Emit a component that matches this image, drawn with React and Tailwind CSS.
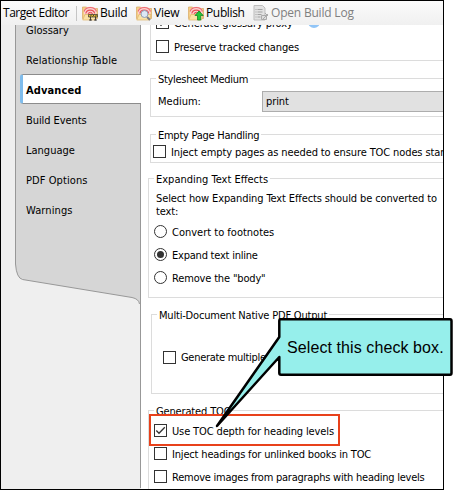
import React from "react";

const UI = "font-['DejaVu_Sans_Condensed','DejaVu_Sans','Noto_Sans',sans-serif] [font-stretch:condensed]";

function Label({ children, className = "" }) {
  return <span className={`whitespace-nowrap ${className}`}>{children}</span>;
}

function Check({ checked }) {
  return (
    <span className="flex h-[13px] w-[13px] shrink-0 items-center justify-center border border-[#333] bg-white">
      {checked && (
        <svg width="11" height="11" viewBox="0 0 11 11" fill="none">
          <path d="M1.3 5.5 4 8.2 9.8 2.2" stroke="#333" strokeWidth="1.3" />
        </svg>
      )}
    </span>
  );
}

function Radio({ checked }) {
  return (
    <span className="flex h-[13px] w-[13px] shrink-0 items-center justify-center rounded-full border border-[#333] bg-white">
      {checked && <span className="h-[7px] w-[7px] rounded-full bg-[#333]" />}
    </span>
  );
}

function Row({ children, control, className = "" }) {
  return (
    <div className={`flex h-[13px] items-start gap-[5px] ${className}`}>
      {control}
      {children}
    </div>
  );
}

function Group({ title, titleClass = "", className = "", children }) {
  return (
    <section className={`shrink-0 border border-r-0 border-[#dcdcdc] ${className}`}>
      <h2 className="-mt-[7px] flex h-[14px]">
        <span className={`ml-[5px] bg-white px-[2px] whitespace-nowrap ${titleClass}`}>{title}</span>
      </h2>
      {children}
    </section>
  );
}

function Folder() {
  return (
    <>
      <path d="M.5 2h4l1.500 1.500h9.500v10h-15z" fill="#f4cf86" stroke="#d9a860" strokeWidth=".7" />
      <path d="M2 9.500V5.500A6.500 5 0 0 1 14.500 5.500V9.500z" fill="#fbd3cf" />
      <path d="M2 6.500A6.500 5.500 0 0 1 14.500 6.500" fill="none" stroke="#ee6a72" strokeWidth="1.200" />
      <path d="M3.800 8.500A4.500 4 0 0 1 12.700 8.500" fill="none" stroke="#e8515a" strokeWidth="1.200" />
      <path d="M6 9.500A2.300 2.200 0 0 1 10.600 9.500" fill="#f6aaa7" stroke="#e8515a" />
      <path d="M.7 15 3 9.500h12L13.500 15z" fill="#fae2a6" stroke="#e0b56c" strokeWidth=".7" />
    </>
  );
}

function ToolIcon({ kind }) {
  return (
    <svg width="16" height="16" viewBox="0 0 16 16" className="shrink-0">
      {kind === "log" ? (
        <>
          <path d="M1 .5h8.500l2.500 2.500v12H1z" fill="#e2e2e2" stroke="#bdbdbd" />
          <path d="M2.500 4.500h1M4.500 4.500h5M2.500 7h1M4.500 7h5M2.500 9.500h1M4.500 9.500h4M2.500 12h1M4.500 12h3" stroke="#a3a3a3" />
          <path d="M8.500 10.500h5v4h-5zM10 14l5-5M12 8l3 3" fill="#ddd" stroke="#aaa" />
        </>
      ) : (
        <Folder />
      )}
      {kind === "build" && (
        <>
          <path d="M6.500 9.500h9V12h-9z" fill="#f2c52f" stroke="#333" strokeWidth=".7" />
          <path d="m8 11.800 1.500-2m1 2 1.500-2m1 2 1.500-2M8.500 12v3.500M13.500 12v3.500M7 15h3m2 0h3" stroke="#333" strokeWidth=".9" />
        </>
      )}
      {kind === "view" && (
        <>
          <path d="m11 12 3 3" stroke="#777b84" strokeWidth="2" />
          <circle cx="8.500" cy="9" r="3.500" fill="#dce8f5" stroke="#93a0b3" />
        </>
      )}
      {kind === "publish" && (
        <path d="m11 6 4.200 4.500h-2.500V15H9.500v-4.500H7z" fill="#25c83b" stroke="#15852a" strokeWidth=".8" />
      )}
    </svg>
  );
}

function Tool({ kind, className = "", children }) {
  return (
    <div className={`flex items-center gap-[2px] ${className}`}>
      <ToolIcon kind={kind} />
      <Label>{children}</Label>
    </div>
  );
}

function Toolbar() {
  return (
    <header className="flex h-[24px] shrink-0 items-center bg-linear-to-b from-[#fbfbfb] to-[#f0f0f0] pl-[2px] font-['Open_Sans','Noto_Sans',sans-serif] text-[12px] leading-[16px] tracking-[-0.2px] [font-stretch:normal]">
      <Label className="w-[73px] tracking-[-0.48px]">Target Editor</Label>
      <span className="mr-[5px] h-[15px] w-px bg-[#c5c5c5]" />
      <Tool kind="build" className="w-[54px]">Build</Tool>
      <Tool kind="view" className="w-[52px]">View</Tool>
      <Tool kind="publish" className="w-[65px] tracking-[-0.35px]">Publish</Tool>
      <Tool kind="log" className="text-[#808080]">Open Build Log</Tool>
    </header>
  );
}

function Tab({ children, className = "" }) {
  return <div className={`flex h-[30px] items-center pt-[4px] pl-[25px] ${className}`}>{children}</div>;
}

function Sidebar() {
  return (
    <nav className="relative w-[140px] shrink-0 bg-[#efefef]">
      <svg className="absolute top-0 left-0" width="140" height="463" viewBox="1 25 140 463">
        <path d="M15.500 24V264Q16.500 278 22.500 279.500L132 297.500Q139 299 139.500 303H140.500V24Z" fill="#d6d6d6" />
        <path d="M15.500 24V264Q16.500 278 22.500 279.500L132 297.500Q139 299 139.500 304M140.500 24V488" fill="none" stroke="#989898" />
      </svg>
      <div className="relative -mt-[11px]">
        <Tab>Glossary</Tab>
        <Tab className="tracking-[0.11px]">Relationship Table</Tab>
        <div className="ml-[19px] flex h-[30px] items-center rounded-l-[3px] border-y border-l-[3px] border-y-[#8c8c8c] border-l-[#7fbcec] bg-white pt-[3px] pl-[3px] font-bold tracking-[0.1px]">
          Advanced
        </div>
        <Tab className="tracking-[-0.08px]">Build Events</Tab>
        <Tab>Language</Tab>
        <Tab className="tracking-[0.08px]">PDF Options</Tab>
        <Tab className="tracking-[0.1px]">Warnings</Tab>
      </div>
    </nav>
  );
}

function Settings() {
  return (
    <main className="flex min-w-0 flex-1 flex-col overflow-hidden bg-white pl-[7px]">
      <section className="ml-[2px] h-[36px] shrink-0 border-b border-l border-[#dcdcdc] pl-[5px]">
        <Row control={<Check checked />} className="-mt-[9px]">
          <Label className="pt-px tracking-[-0.12px]">Generate glossary proxy</Label>
          <span className="ml-[10px] h-[12px] w-[12px] rounded-full border-[4px] border-[#91c5f7]" />
        </Row>
        <Row control={<Check />} className="mt-[11px]">
          <Label className="pt-px tracking-[-0.12px]">Preserve tracked changes</Label>
        </Row>
      </section>
      <Group title="Stylesheet Medium" titleClass="pt-px h-[14px] tracking-[-0.3px]" className="mt-[17px] ml-[2px] h-[39px]">
        <div className="mt-[5px] flex h-[21px] items-center pl-[7px]">
          <Label className="w-[104px]">Medium:</Label>
          <div className="flex h-[21px] flex-1 items-center border border-r-0 border-[#adadad] bg-[#e1e1e1] pt-px pl-[3px] tracking-[-0.1px]">print</div>
        </div>
      </Group>
      <Group title="Empty Page Handling" titleClass="pt-px h-[14px] tracking-[-0.26px]" className="mt-[17px] ml-[2px] h-[29px]">
        <Row control={<Check />} className="mt-[3px] ml-[2px]">
          <Label className="pt-px tracking-[-0.11px]">Inject empty pages as needed to ensure TOC nodes start</Label>
        </Row>
      </Group>
      <Group title="Expanding Text Effects" titleClass="pt-px h-[14px]" className="mt-[15px] h-[120px]">
        <p className="mt-[6px] ml-[7px] leading-[13px] tracking-[-0.11px] whitespace-nowrap">
          Select how Expanding Text Effects should be converted to<br />text:
        </p>
        <div className="mt-[7px] ml-[5px] flex flex-col gap-[10px]">
          <Row control={<Radio />}><Label className="pt-px">Convert to footnotes</Label></Row>
          <Row control={<Radio checked />}><Label className="pt-px tracking-[-0.22px]">Expand text inline</Label></Row>
          <Row control={<Radio />}><Label className="pt-px tracking-[-0.16px]">Remove the "body"</Label></Row>
        </div>
      </Group>
      <Group title="Multi-Document Native PDF Output" titleClass="pt-px h-[14px] tracking-[-0.19px]" className="mt-[16px] ml-[3px] h-[80px]">
        <Row control={<Check />} className="mt-[29px] ml-[11px]">
          <Label className="tracking-[-0.3px]">Generate multiple PDFs</Label>
        </Row>
      </Group>
      <Group title="Generated TOC" titleClass="pt-px h-[14px] tracking-[-0.15px]" className="mt-[16px] h-[90px]">
        <div className="mt-[6px] ml-[5px] flex flex-col gap-[10px]">
          <Row control={<Check checked />}><Label className="pt-px tracking-[-0.13px]">Use TOC depth for heading levels</Label></Row>
          <Row control={<Check />}><Label className="pt-px tracking-[-0.17px]">Inject headings for unlinked books in TOC</Label></Row>
          <Row control={<Check />}><Label className="pt-px tracking-[-0.24px]">Remove images from paragraphs with heading levels</Label></Row>
        </div>
      </Group>
    </main>
  );
}

export default function App() {
  return (
    <div className={`relative h-[490px] w-[461px] overflow-hidden bg-white text-[11px] leading-[14px] text-black ${UI}`}>
      <div className="flex h-[490px] w-[444px] flex-col overflow-hidden border border-black">
        <Toolbar />
        <div className="flex min-h-0 flex-1 overflow-hidden">
          <Sidebar />
          <Settings />
        </div>
      </div>
      <div className="absolute top-[414px] left-[149px] h-[32px] w-[191px] border-2 border-[#e8411b]" />
      <div className="absolute top-[318px] left-[215px] h-[112px] w-[238px]">
        <svg className="absolute inset-0" width="238" height="112" viewBox="215 318 238 112">
          <path
            d="M280.500 319.300H450Q451.500 319.300 451.500 321V373Q451.500 374.700 450 374.700H281Q279.300 374.700 279.300 373V357L217 426 279.300 337V321Q279.300 319.300 280.500 319.300Z"
            fill="#96efeb"
            stroke="#000"
            strokeWidth="2.500"
            strokeLinejoin="round"
          />
        </svg>
        <span className="absolute top-[20px] left-[72px] font-['Liberation_Sans',sans-serif] text-[16px] leading-[20px] tracking-[0.09px] whitespace-nowrap">
          Select this check box.
        </span>
      </div>
    </div>
  );
}
